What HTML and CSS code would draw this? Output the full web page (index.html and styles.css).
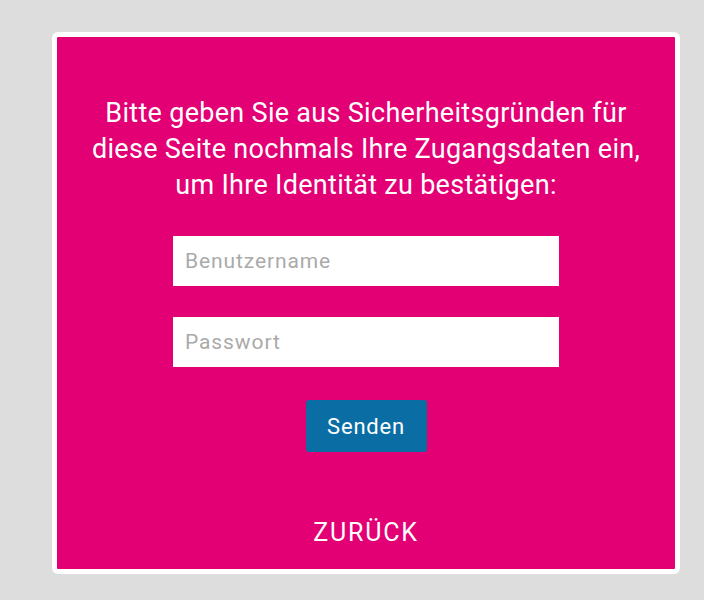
FILE: index.html
```html
<!DOCTYPE html>
<html lang="de">
  <head>
    <meta charset="utf-8" />
    <title>Identität bestätigen</title>
    <link rel="stylesheet" href="styles.css">
  </head>
  <body>
    <div class="auth-card">
      <p class="auth-intro">Bitte geben Sie aus Sicherheitsgründen für diese Seite nochmals Ihre Zugangsdaten ein, um Ihre Identität zu bestätigen:</p>
      <form class="auth-form" onsubmit="return false">
        <input type="text" class="auth-input" placeholder="Benutzername" />
        <input type="password" class="auth-input" placeholder="Passwort" />
        <button type="submit" class="btn-send">Senden</button>
      </form>
      <a href="#" class="auth-back">ZURÜCK</a>
    </div>
  </body>
</html>
```

FILE: styles.css
```css
* {
  margin: 0;
  padding: 0;
  box-sizing: border-box;
}

body {
  font-family: Roboto, 'Liberation Sans', Arial, sans-serif;
  background: #dddddd;
  padding: 32px 24px 0 52px;
}

.auth-card {
  background: #e20074;
  border: 5px solid #ffffff;
  border-radius: 6px;
  width: 628px;
  height: 542px;
  padding: 58px 28px 0;
  display: flex;
  flex-direction: column;
  align-items: center;
  color: #ffffff;
}

.auth-intro {
  font-size: 27px;
  line-height: 36px;
  letter-spacing: 0.3px;
  text-align: center;
}

.auth-form {
  display: flex;
  flex-direction: column;
  align-items: center;
  margin-top: 33px;
}

.auth-input {
  width: 386px;
  height: 50px;
  border: none;
  background: #ffffff;
  padding: 0 12px;
  font-family: inherit;
  font-size: 21px;
  letter-spacing: 0.9px;
  color: #333;
  margin-bottom: 31px;
  outline: none;
}

.auth-input::placeholder {
  color: #aaaaaa;
}

.btn-send {
  margin-top: 2px;
  width: 121px;
  height: 52px;
  border: none;
  border-radius: 3px;
  background: #0a6ea5;
  color: #ffffff;
  font-family: inherit;
  font-size: 22px;
  letter-spacing: 0.8px;
  cursor: pointer;
}

.auth-back {
  margin-top: 67px;
  color: #ffffff;
  text-decoration: none;
  font-size: 25px;
  line-height: 28px;
  letter-spacing: 1.8px;
}
```
